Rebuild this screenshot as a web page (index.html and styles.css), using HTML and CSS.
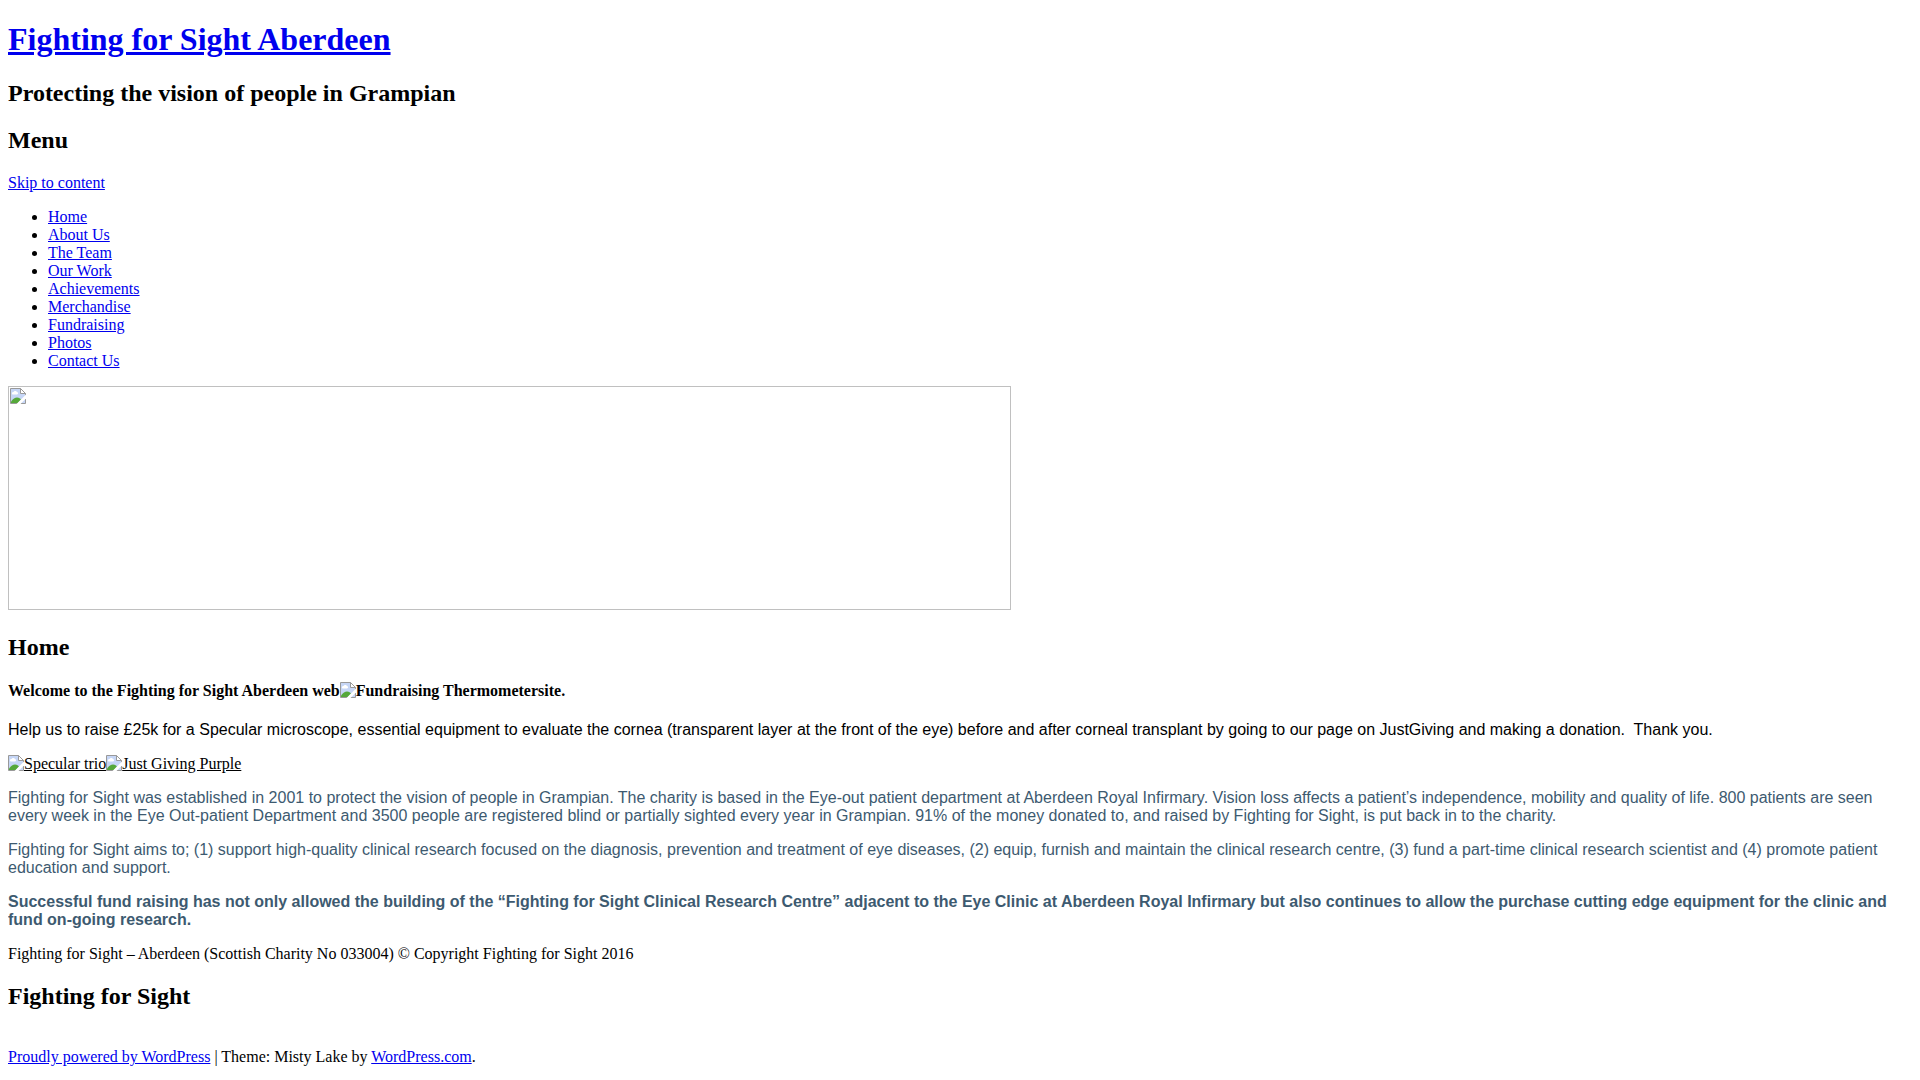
FILE: index.html
```
<!DOCTYPE html>
<html lang="en">
<head>
  <meta charset="UTF-8">
  <title>Fighting for Sight Aberdeen</title>
  <link rel="stylesheet" href="styles.css">
</head>
<body>

  <header>
    <h1><a href="#">Fighting for Sight Aberdeen</a></h1>
    <h2>Protecting the vision of people in Grampian</h2>

    <nav>
      <h2>Menu</h2>
      <a href="#content">Skip to content</a>
      <ul>
        <li><a href="#">Home</a></li>
        <li><a href="#">About Us</a></li>
        <li><a href="#">The Team</a></li>
        <li><a href="#">Our Work</a></li>
        <li><a href="#">Achievements</a></li>
        <li><a href="#">Merchandise</a></li>
        <li><a href="#">Fundraising</a></li>
        <li><a href="#">Photos</a></li>
        <li><a href="#">Contact Us</a></li>
      </ul>
    </nav>

    <a href="#" class="header-image"><svg class="icon"><use href="#picture"/></svg></a>
  </header>

  <main id="content">
    <h2 class="entry-title">Home</h2>
    <h4>Welcome to the Fighting for Sight Aberdeen web<svg class="icon"><use href="#picture"/></svg>Fundraising Thermometersite.</h4>
    <p class="appeal">Help us to raise £25k for a Specular microscope, essential equipment to evaluate the cornea (transparent layer at the front of the eye) before and after corneal transplant by going to our page on JustGiving and making a donation.&nbsp; Thank you.</p>
    <p><a href="#" class="giving"><svg class="icon"><use href="#picture"/></svg>Specular trio</a><a href="#" class="giving"><svg class="icon"><use href="#picture"/></svg>Just Giving Purple</a></p>
    <p class="about">Fighting for Sight was established in 2001 to protect the vision of people in Grampian. The charity is based in the Eye-out patient department at Aberdeen Royal Infirmary. Vision loss affects a patient’s independence, mobility and quality of life. 800 patients are seen every week in the Eye Out-patient Department and 3500 people are registered blind or partially sighted every year in Grampian. 91% of the money donated to, and raised by Fighting for Sight, is put back in to the charity.</p>
    <p class="about">Fighting for Sight aims to; (1) support high-quality clinical research focused on the diagnosis, prevention and treatment of eye diseases, (2) equip, furnish and maintain the clinical research centre, (3) fund a part-time clinical research scientist and (4) promote patient education and support.</p>
    <p class="about"><strong>Successful fund raising has not only allowed the building of the “Fighting for Sight Clinical Research Centre” adjacent to the Eye Clinic at Aberdeen Royal Infirmary but also continues to allow the purchase cutting edge equipment for the clinic and fund on-going research.</strong></p>
    <p>Fighting for Sight – Aberdeen (Scottish Charity No 033004) © Copyright Fighting for Sight 2016</p>
  </main>

  <h2>Fighting for Sight</h2>

  <footer>
    <a href="#">Proudly powered by WordPress</a> | Theme: Misty Lake by <a href="#">WordPress.com</a>.
  </footer>

  <svg class="symbols">
    <symbol id="picture" viewBox="0 0 16 16">
      <path d="M.5.5h10l5 5v10H.5z" fill="#c6d6f6"/>
      <path d="M3 6.500c-1.500 0-1.500-2.500.5-2.500C4 2.500 6.500 2.500 7 4 8.500 4 8.500 6.500 7 6.500z" fill="#fff"/>
      <path d="M1 15v-1.500C4 9.500 7 8.500 10 10.500l1 1L8 15z" fill="#55a83a"/>
      <path d="M.5 15.500V.5h10l5 5v10z" fill="none" stroke="#999"/>
      <path d="M10.500.5v5h5z" fill="#fff" stroke="#999"/>
      <path d="M6.500 16l9.500-9.500v4L10.500 16z" fill="#fff"/>
    </symbol>
  </svg>

</body>
</html>
```
FILE: styles.css
```
body {
  margin: 0 8px;
  font-family: "Liberation Serif", "Times New Roman", serif;
  font-size: 16px;
  color: #000;
  background: #fff;
}

a {
  color: #0000ee;
  text-decoration: underline;
}

.symbols {
  display: none;
}

.icon {
  width: 16px;
  height: 16px;
}

h4 .icon,
.giving .icon {
  vertical-align: -2px;
}

.header-image {
  display: block;
  box-sizing: border-box;
  width: 1003px;
  height: 224px;
  border: 1px solid #c0c0c0;
}

.header-image .icon {
  display: block;
  margin: 1px;
}

.entry-title {
  margin-top: 24px;
}

.appeal,
.about {
  font-family: "Liberation Sans", Arial, sans-serif;
}

.about {
  color: #3d5a70;
}

.giving {
  color: #000;
}

footer {
  margin-top: 38px;
}
```
